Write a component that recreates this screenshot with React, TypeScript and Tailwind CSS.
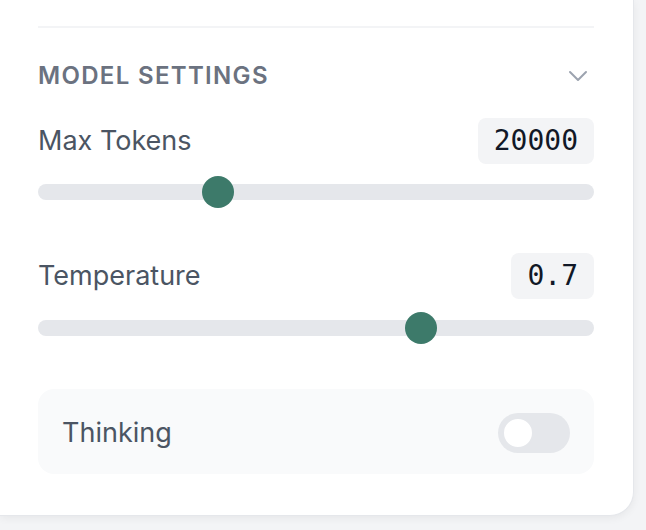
import React, { useState } from 'react';
import { ChevronDown } from 'lucide-react';

const Slider = ({ value, max }: { value: number; max: number }) => {
  const pct = value / max;
  return (
    <div className="relative h-[32px] flex items-center">
      <div className="h-[16px] w-full rounded-full bg-[#e5e7eb]" />
      <div
        className="absolute top-0 h-[32px] w-[32px] rounded-full bg-[#3d7a6a]"
        style={{ left: `calc(${pct} * (100% - 32px))` }}
      />
    </div>
  );
};

const ValueRow = ({ label, value }: { label: string; value: string }) => (
  <div className="flex items-center justify-between">
    <span className="text-[27px] leading-[34px] text-[#4b5563]">{label}</span>
    <span className="rounded-[8px] bg-[#f3f4f6] px-[16px] py-[4px] font-['DejaVu_Sans_Mono',monospace] text-[28px] leading-[38px] text-[#111827]">
      {value}
    </span>
  </div>
);

export default function App() {
  const [thinking, setThinking] = useState(false);

  return (
    <div className="h-[530px] w-[646px] overflow-hidden bg-[#f3f4f6] font-['Inter',sans-serif]">
      <div className="w-[634px] h-[516px] rounded-br-[24px] border-r border-b border-[#e5e7eb] bg-white pl-[38px] pr-[39px] pt-[26px] shadow-[0_2px_8px_rgba(0,0,0,0.06)]">
        <div className="h-[2px] bg-[#f3f4f6]" />

        <div className="mt-[32px] flex h-[32px] items-center justify-between">
          <span className="text-[24px] font-semibold uppercase tracking-[0.055em] text-[#6b7280]">Model Settings</span>
          <ChevronDown className="h-[32px] w-[32px] text-[#9ca3af]" strokeWidth={1.5} />
        </div>

        <div className="mt-[26px]">
          <ValueRow label="Max Tokens" value="20000" />
        </div>
        <div className="mt-[12px]">
          <Slider value={20000} max={64000} />
        </div>

        <div className="mt-[45px]">
          <ValueRow label="Temperature" value="0.7" />
        </div>
        <div className="mt-[13px]">
          <Slider value={0.7} max={1} />
        </div>

        <div className="mt-[45px] flex h-[85px] items-center justify-between rounded-[16px] bg-[#f9fafb] px-[24px] pt-[3px]">
          <span className="text-[27px] text-[#4b5563]">Thinking</span>
          <button
            onClick={() => setThinking(!thinking)}
            className="relative h-[40px] w-[72px] rounded-full bg-[#e5e7eb]"
          >
            <span className="absolute left-[4px] top-[4px] h-[32px] w-[32px] rounded-full border-2 border-[#e5e7eb] bg-white" />
          </button>
        </div>
      </div>
    </div>
  );
}
